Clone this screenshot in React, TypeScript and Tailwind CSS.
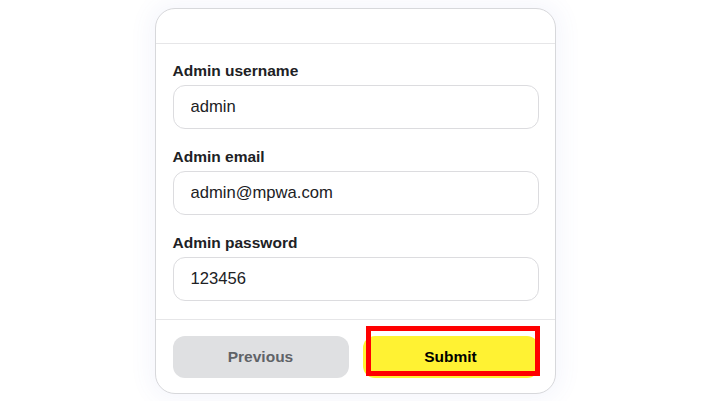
import { useState } from 'react'

const fields = [
  { id: 'username', label: 'Admin username', type: 'text', value: 'admin' },
  { id: 'email', label: 'Admin email', type: 'email', value: 'admin@mpwa.com' },
  { id: 'password', label: 'Admin password', type: 'text', value: '123456' },
]

export default function App() {
  const [values, setValues] = useState<Record<string, string>>(
    Object.fromEntries(fields.map(f => [f.id, f.value]))
  )

  return (
    <div className="min-h-[401px] w-[721px] bg-white pt-2 font-['Liberation_Sans',Arial,sans-serif]">
      <div className="ml-[155px] w-[401px] rounded-[20px] border border-[#d7d8db] bg-white shadow-[0_0_22px_6px_rgba(90,110,210,0.06)]">
        <div className="h-[35px] border-b border-[#e6e6e8]" />

        <form className="flex flex-col gap-[18px] px-[16.5px] pt-[17px] pb-[18px]" onSubmit={e => e.preventDefault()}>
          {fields.map(f => (
            <div key={f.id} className="flex flex-col gap-1">
              <label htmlFor={f.id} className="text-[15.5px] leading-5 font-bold text-[#202124]">
                {f.label}
              </label>
              <input
                id={f.id}
                type={f.type}
                value={values[f.id]}
                onChange={e => setValues({ ...values, [f.id]: e.target.value })}
                className="h-[44px] w-full rounded-xl border border-[#dcdcdf] bg-white px-[17px] text-[16.6px] text-[#202124] focus:outline-none"
              />
            </div>
          ))}
        </form>

        <div className="grid grid-cols-2 gap-[14px] border-t border-[#e6e6e8] px-[16.5px] pt-4 pb-[15px]">
          <button type="button" className="h-[42px] rounded-xl bg-[#dfe0e2] text-[15.5px] font-bold text-[#5f6368]">
            Previous
          </button>
          <div className="relative">
            <button type="submit" className="h-[42px] w-full rounded-xl bg-[#fff233] text-[15.5px] font-bold text-black">
              Submit
            </button>
            <div className="pointer-events-none absolute top-[-10px] left-[3px] h-[50px] w-[174px] border-[5px] border-[#ff0000]" />
          </div>
        </div>
      </div>
    </div>
  )
}
